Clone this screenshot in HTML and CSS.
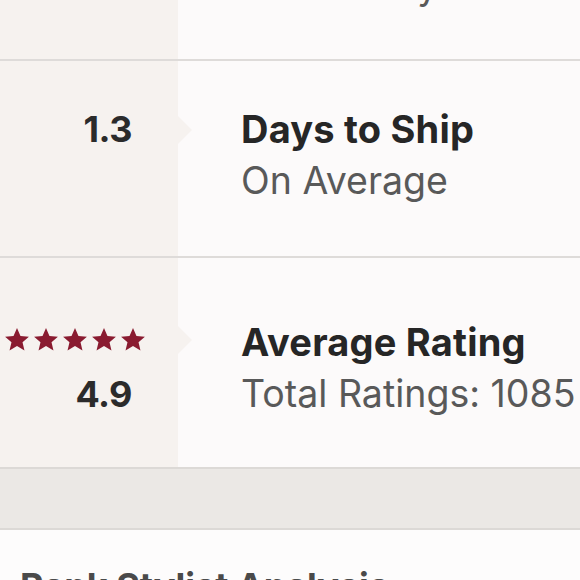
FILE: index.html
```html
<!DOCTYPE html>
<html>
<head>
<meta charset="utf-8">
<link rel="stylesheet" href="styles.css">
</head>
<body>
<div class="page">
  <div class="stat stat-top">
    <div class="stat-left"></div>
    <div class="stat-right top-right"><div class="sub cut">Based on your last few days</div></div>
  </div>
  <div class="stat stat-ship">
    <div class="stat-left pointer"><div class="num">1.3</div></div>
    <div class="stat-right">
      <div class="title">Days to Ship</div>
      <div class="sub">On Average</div>
    </div>
  </div>
  <div class="stat stat-rating">
    <div class="stat-left pointer">
      <div class="stars">
        <svg viewBox="0 0 24 24"><path d="M12 1l3.2 7.2 7.8.7-5.9 5.1 1.8 7.7L12 17.6l-6.9 4.1 1.8-7.7L1 8.9l7.8-.7z"/></svg>
        <svg viewBox="0 0 24 24"><path d="M12 1l3.2 7.2 7.8.7-5.9 5.1 1.8 7.7L12 17.6l-6.9 4.1 1.8-7.7L1 8.9l7.8-.7z"/></svg>
        <svg viewBox="0 0 24 24"><path d="M12 1l3.2 7.2 7.8.7-5.9 5.1 1.8 7.7L12 17.6l-6.9 4.1 1.8-7.7L1 8.9l7.8-.7z"/></svg>
        <svg viewBox="0 0 24 24"><path d="M12 1l3.2 7.2 7.8.7-5.9 5.1 1.8 7.7L12 17.6l-6.9 4.1 1.8-7.7L1 8.9l7.8-.7z"/></svg>
        <svg viewBox="0 0 24 24"><path d="M12 1l3.2 7.2 7.8.7-5.9 5.1 1.8 7.7L12 17.6l-6.9 4.1 1.8-7.7L1 8.9l7.8-.7z"/></svg>
      </div>
      <div class="num">4.9</div>
    </div>
    <div class="stat-right">
      <div class="title">Average Rating</div>
      <div class="sub">Total Ratings: 1085</div>
    </div>
  </div>
  <div class="band"></div>
  <div class="section">
    <h2 class="section-title">Rank Stylist Analysis</h2>
  </div>
</div>
</body>
</html>
```
FILE: styles.css
```css
html, body {
  margin: 0;
  padding: 0;
  width: 580px;
  height: 580px;
  overflow: hidden;
  background: #fdfcfc;
  font-family: "Inter", "Noto Sans", sans-serif;
}
.page {
  display: flex;
  flex-direction: column;
}
.stat {
  display: flex;
  border-bottom: 2px solid #dedbd9;
}
.stat-top { height: 59px; }
.stat-ship { height: 195px; }
.stat-rating { height: 209px; border-bottom: none; }
.stat-left {
  width: 178px;
  flex: none;
  background: #f6f2ef;
  box-sizing: border-box;
  padding-right: 46px;
  display: flex;
  flex-direction: column;
  align-items: flex-end;
  position: relative;
}
.pointer::after {
  content: "";
  position: absolute;
  right: -14px;
  width: 0;
  height: 0;
  border-top: 14px solid transparent;
  border-bottom: 14px solid transparent;
  border-left: 14px solid #f6f2ef;
}
.stat-ship .pointer::after { top: 55px; }
.stat-rating .pointer::after { top: 68px; }
.stat-right {
  flex: 1;
  background: #fcfafa;
  padding-left: 63px;
  display: flex;
  flex-direction: column;
}
.top-right {
  overflow: hidden;
  justify-content: flex-end;
  padding-bottom: 47px;
}
.cut { white-space: nowrap; }
.stat-ship .stat-left { padding-top: 42px; }
.stat-ship .stat-right { padding-top: 42px; }
.stat-rating .stat-left { padding-top: 56px; }
.stat-rating .stat-right { padding-top: 58px; }
.num {
  font-size: 36px;
  font-weight: 700;
  color: #2b2b2b;
  line-height: 52px;
  letter-spacing: -0.5px;
}
.stars + .num { margin-top: 2px; }
.title {
  font-size: 38px;
  font-weight: 700;
  color: #262626;
  line-height: 52px;
  white-space: nowrap;
  letter-spacing: 0.2px;
}
.sub {
  font-size: 37.5px;
  font-weight: 400;
  color: #595959;
  line-height: 52px;
  white-space: nowrap;
}
.stars {
  display: flex;
  gap: 3px;
  margin-right: -14px;
  margin-left: -4px;
  height: 52px;
  align-items: center;
}
.stars svg {
  width: 26px;
  height: 26px;
  fill: #8a1b30;
}
.band {
  height: 59px;
  background: #ebe8e5;
  border-top: 2px solid #dcd9d6;
  border-bottom: 2px solid #dcd9d6;
}
.section {
  padding: 30px 20px 0;
  background: #fdfcfc;
}
.section-title {
  margin: 0;
  font-size: 36px;
  font-weight: 700;
  color: #4a4a4a;
  line-height: 52px;
  white-space: nowrap;
}
```
